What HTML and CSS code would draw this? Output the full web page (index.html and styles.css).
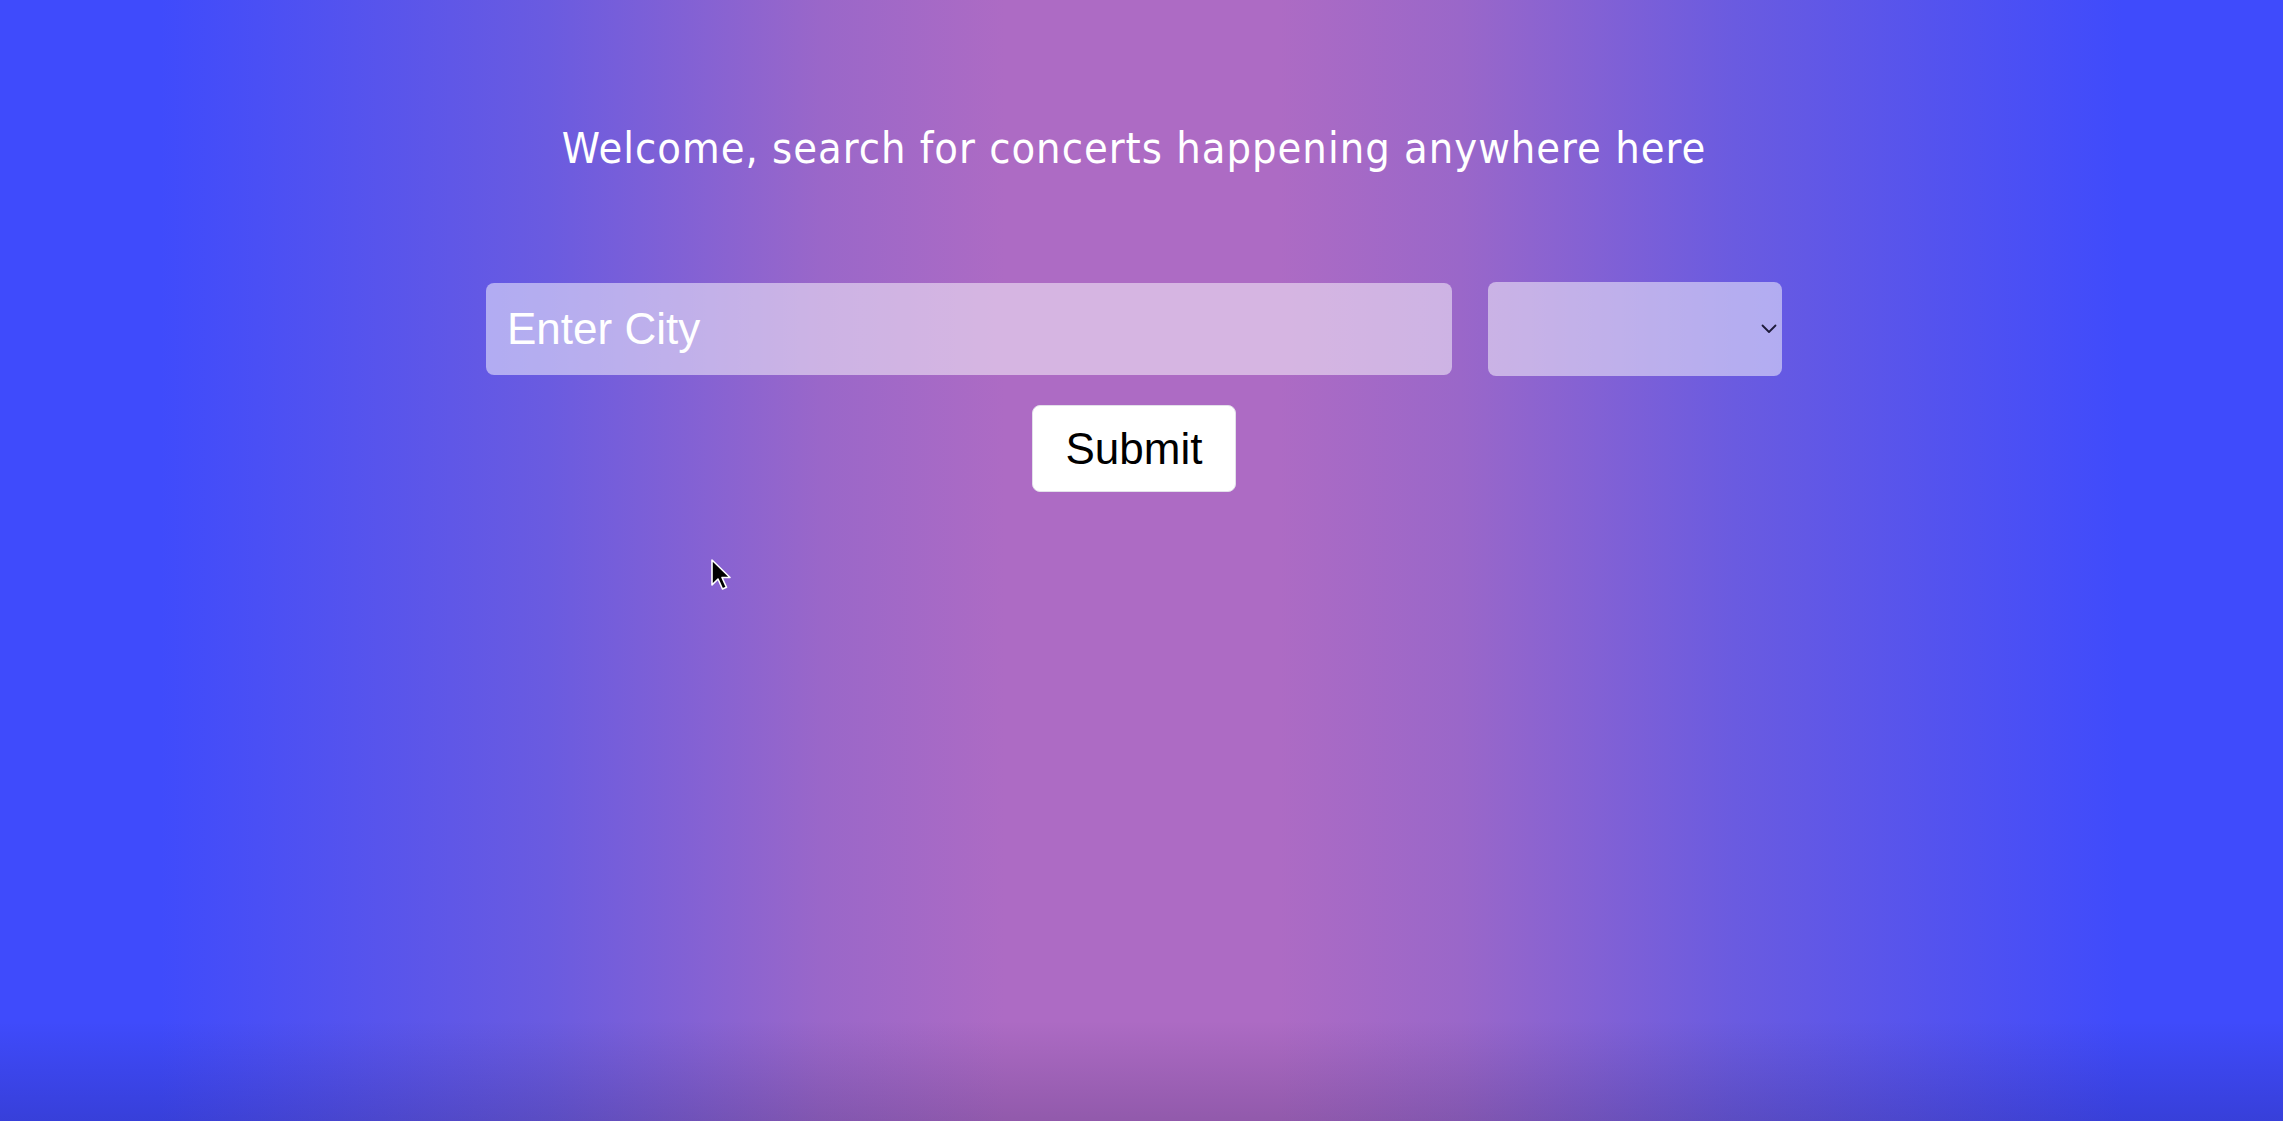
FILE: index.html
```html
<!DOCTYPE html>
<html lang="en">
<head>
<meta charset="utf-8">
<title>Concerts</title>
<link rel="stylesheet" href="styles.css">
</head>
<body>
<main class="page">
  <h1 class="title">Welcome, search for concerts happening anywhere here</h1>
  <form class="search">
    <div class="row">
      <input class="city" type="text" placeholder="Enter City">
      <div class="select">
        <svg class="chev" width="16" height="10" viewBox="0 0 16 10"><path d="M1.5 1.5 L8 8 L14.5 1.5" fill="none" stroke="#1e1b3a" stroke-width="1.8" stroke-linecap="round" stroke-linejoin="round"/></svg>
      </div>
    </div>
    <button class="submit" type="button">Submit</button>
  </form>
  <svg class="cursor" width="22" height="34" viewBox="0 0 22 34"><path d="M2 2 L2 27 L8 21 L12.5 31 L16.5 29.3 L12 19.5 L20 19.5 Z" fill="#000" stroke="#fff" stroke-width="1.6" stroke-linejoin="round"/></svg>
</main>
</body>
</html>
```
FILE: styles.css
```css
html, body {
  margin: 0;
  height: 100%;
}
body {
  background:
    linear-gradient(to bottom, rgba(0,0,0,0) 0, rgba(0,0,0,0) 1020px, rgba(20,10,60,0.18) 1121px),
    linear-gradient(to right, #3f4bfc 0%, #3f4bfc 7%, #6a5be0 24%, #9a67c9 36%, #ad6bc4 44%, #ad6bc4 56%, #9a67c9 64%, #6a5be0 76%, #3f4bfc 93%, #3f4bfc 100%);
  font-family: "Liberation Sans", Arial, sans-serif;
  overflow: hidden;
}
.page {
  position: relative;
  height: 1121px;
  box-sizing: border-box;
  padding: 118px 15px 0 0;
  display: flex;
  flex-direction: column;
  align-items: center;
}
.title {
  margin: 0;
  font-family: "DejaVu Sans", sans-serif;
  font-stretch: condensed;
  font-weight: normal;
  font-size: 43px;
  line-height: 60px;
  color: #ffffff;
  letter-spacing: 1px;
}
.search {
  margin-top: 104px;
  display: flex;
  flex-direction: column;
  align-items: center;
}
.row {
  display: flex;
  gap: 36px;
  align-items: flex-start;
}
.city {
  width: 966px;
  height: 92px;
  box-sizing: border-box;
  border: none;
  border-radius: 8px;
  background: rgba(255,255,255,0.5);
  padding: 0 21px;
  font-family: "Liberation Sans", Arial, sans-serif;
  font-size: 44px;
  color: #fff;
  outline: none;
  margin-top: 1px;
}
.city::placeholder {
  color: #ffffff;
  opacity: 1;
}
.select {
  width: 294px;
  height: 94px;
  box-sizing: border-box;
  border-radius: 8px;
  background: rgba(255,255,255,0.5);
  display: flex;
  align-items: center;
  justify-content: flex-end;
  padding-right: 5px;
}
.chev {
  display: block;
  margin-top: -1px;
}
.submit {
  margin-top: 29px;
  width: 204px;
  height: 87px;
  background: #ffffff;
  border: 1.5px solid #e3e0ea;
  border-radius: 8px;
  font-family: "Liberation Sans", Arial, sans-serif;
  font-size: 44px;
  color: #000;
  padding: 0;
}
.cursor {
  position: absolute;
  left: 710px;
  top: 558px;
}
```
